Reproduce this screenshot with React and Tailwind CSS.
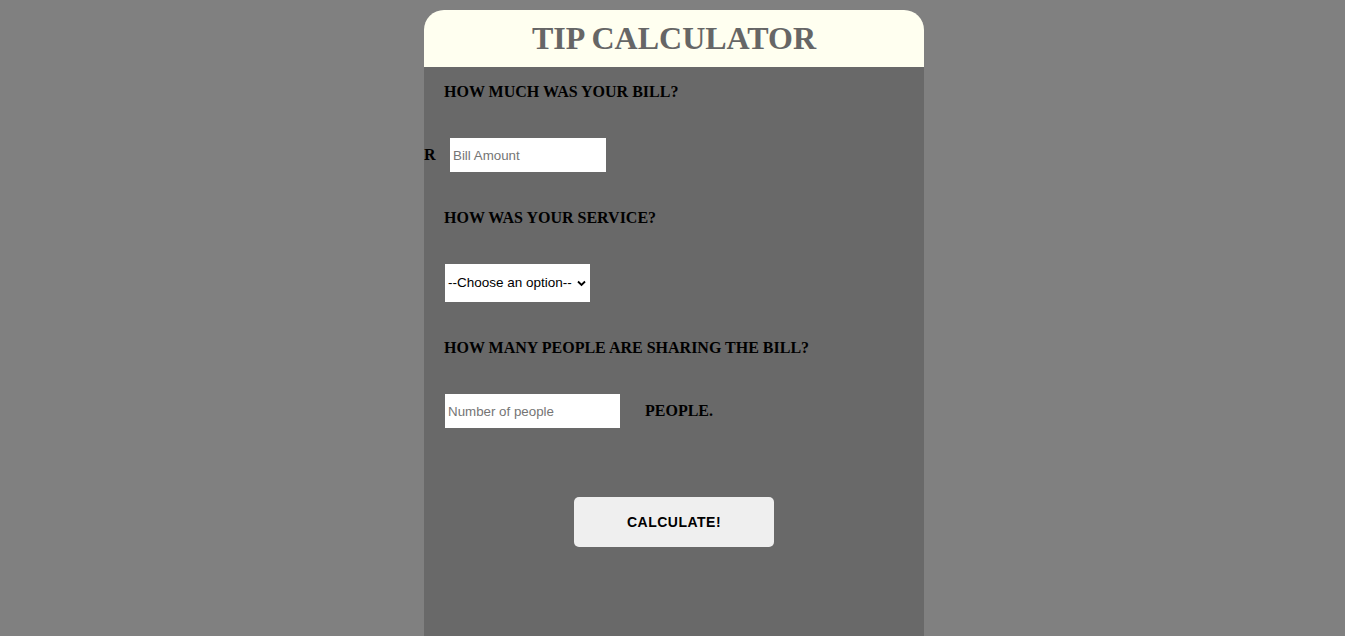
import React from 'react';

const serif = { fontFamily: '"Liberation Serif", "Times New Roman", serif' };
const sans = { fontFamily: '"Liberation Sans", Arial, sans-serif' };

const Label = ({ children, className = '' }) => (
  <p style={serif} className={`text-[16px] leading-6 font-bold text-black ${className}`}>
    {children}
  </p>
);

export default function App() {
  return (
    <div className="min-h-screen bg-[#808080] flex justify-center pt-[10px] pl-[3px]">
      <div className="w-[500px] flex flex-col">
        <div className="h-[57px] bg-[#fffff0] rounded-t-[20px] flex items-center justify-center">
          <h1 style={serif} className="text-[32px] leading-none font-bold text-[#666666] mb-[2px]">
            TIP CALCULATOR
          </h1>
        </div>

        <div className="bg-[#696969] min-h-[570px] pt-[13px] pb-20">
          <Label className="pl-5">HOW MUCH WAS YOUR BILL?</Label>

          <div className="flex items-center mt-[34px]">
            <span style={serif} className="text-[16px] font-bold text-black w-[26px]">R</span>
            <input
              style={sans}
              className="w-[156px] h-[34px] bg-white px-[3px] text-[13.33px] text-black placeholder:text-[#757575] outline-none"
              placeholder="Bill Amount"
            />
          </div>

          <Label className="pl-5 mt-[34px]">HOW WAS YOUR SERVICE?</Label>

          <div className="pl-[21px] mt-[34px]">
            <div className="relative w-[145px] h-[38px]">
              <select
                style={sans}
                className="appearance-none w-full h-full bg-white pl-[3px] text-[13.5px] text-black outline-none"
                defaultValue=""
              >
                <option value="">--Choose an option--</option>
                <option value="30">30% - Outstanding</option>
                <option value="20">20% - Good</option>
                <option value="15">15% - It was OK</option>
                <option value="10">10% - Bad</option>
                <option value="5">5% - Terrible</option>
              </select>
              <svg
                className="absolute right-[4px] top-[16px] pointer-events-none"
                width="9" height="7" viewBox="0 0 9 7"
              >
                <path d="M1 1.5 L4.5 5 L8 1.5" fill="none" stroke="#000" strokeWidth="1.8" />
              </svg>
            </div>
          </div>

          <Label className="pl-5 mt-[34px]">HOW MANY PEOPLE ARE SHARING THE BILL?</Label>

          <div className="flex items-center pl-[21px] mt-[34px]">
            <input
              style={sans}
              className="w-[175px] h-[34px] bg-white px-[3px] text-[13.33px] text-black placeholder:text-[#757575] outline-none"
              placeholder="Number of people"
            />
            <span style={serif} className="ml-[25px] text-[16px] font-bold text-black">PEOPLE.</span>
          </div>

          <div className="flex justify-center mt-[69px]">
            <button
              style={sans}
              className="w-[200px] h-[50px] bg-[#efefef] rounded-[5px] text-[14px] font-bold tracking-[0.5px] text-black"
            >
              CALCULATE!
            </button>
          </div>
        </div>
      </div>
    </div>
  );
}
